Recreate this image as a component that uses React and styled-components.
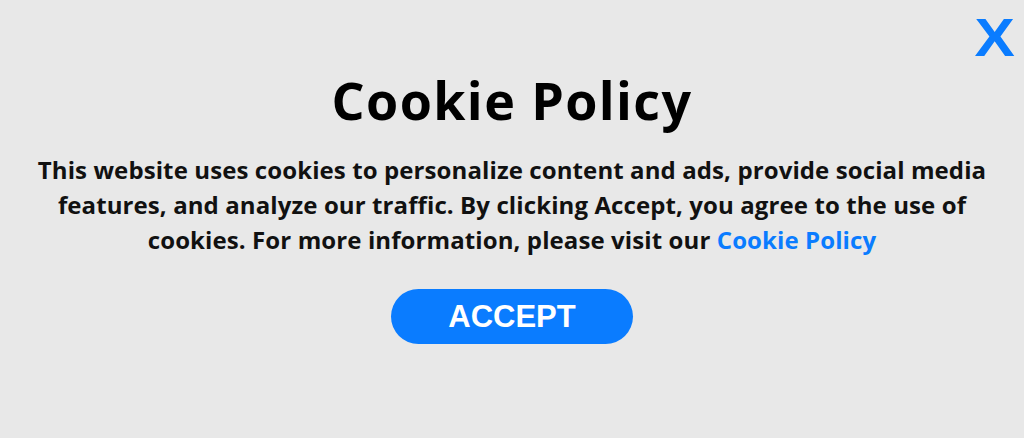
import React from "react";
import styled, { createGlobalStyle } from "styled-components";

const Global = createGlobalStyle`
  html, body { margin: 0; padding: 0; background: #e8e8e8; }
  body { font-family: "Open Sans", "Liberation Sans", sans-serif; }
`;

const Page = styled.div`
  position: relative;
  width: 1024px;
  height: 438px;
  background: #e8e8e8;
  display: flex;
  flex-direction: column;
  align-items: center;
  padding-top: 67px;
  box-sizing: border-box;
`;

const Close = styled.button`
  position: absolute;
  top: 11px;
  right: 12px;
  background: none;
  border: none;
  padding: 0;
  color: #0a7cff;
  font-family: "Liberation Sans", Arial, sans-serif;
  font-weight: 700;
  font-size: 53px;
  line-height: 1;
  cursor: pointer;
  transform: scaleX(1.14);
`;

const Title = styled.h1`
  margin: 0;
  font-family: "Open Sans", sans-serif;
  font-weight: 700;
  font-size: 52px;
  letter-spacing: 1.4px;
  line-height: 66px;
  color: #000;
`;

const Text = styled.p`
  margin: 19px 0 0;
  width: 970px;
  text-align: center;
  font-family: "Open Sans", sans-serif;
  font-weight: 700;
  font-size: 24px;
  letter-spacing: 0.1px;
  line-height: 35px;
  color: #111;
`;

const Link = styled.a`
  color: #0a7cff;
  text-decoration: none;
`;

const Accept = styled.button`
  margin-top: 32px;
  width: 242px;
  height: 55px;
  border: none;
  border-radius: 28px;
  background: #0a7cff;
  color: #fff;
  font-family: "Liberation Sans", Arial, sans-serif;
  font-weight: 700;
  font-size: 31px;
  cursor: pointer;
`;

export default function App() {
  return (
    <>
      <Global />
      <Page>
        <Close aria-label="Close">X</Close>
        <Title>Cookie Policy</Title>
        <Text>
          This website uses cookies to personalize content and ads, provide social media
          features, and analyze our traffic. By clicking Accept, you agree to the use of
          cookies. For more information, please visit our <Link href="#">Cookie Policy</Link>
        </Text>
        <Accept>ACCEPT</Accept>
      </Page>
    </>
  );
}
